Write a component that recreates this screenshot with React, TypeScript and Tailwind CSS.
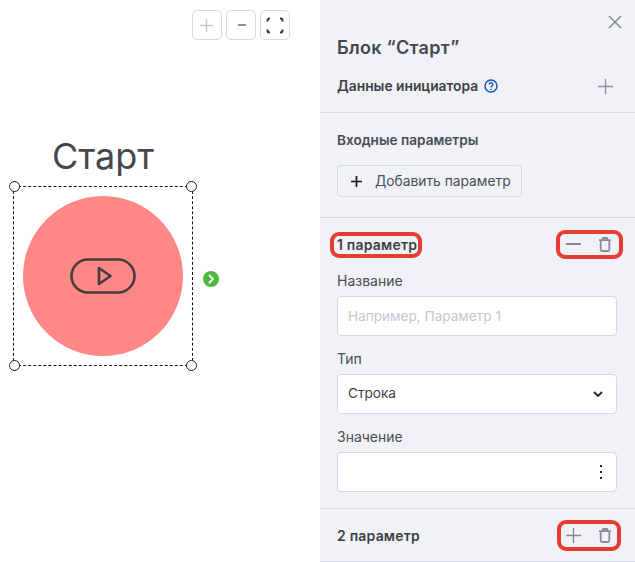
import React from 'react'

const font = "[font-family:Inter,'Noto_Sans',sans-serif]"

const PlusIcon = ({ size = 18, strokeWidth = 1.4, className = '' }: { size?: number; strokeWidth?: number; className?: string }) => (
  <svg width={size} height={size} viewBox="0 0 16 16" className={className} fill="none" stroke="currentColor" strokeWidth={strokeWidth}>
    <path d="M8 0v16M0 8h16" />
  </svg>
)

const TrashIcon = () => (
  <svg width="12" height="15" viewBox="0 0 12 15" fill="none" stroke="#858d9b" strokeWidth="1.8" strokeLinejoin="round">
    <path d="M0 3.2h12M3.8 3.2V1h4.4v2.2M1.7 3.2v9.4c0 .9.5 1.4 1.4 1.4h5.8c.9 0 1.4-.5 1.4-1.4V3.2" />
  </svg>
)

const Handle = ({ className }: { className: string }) => (
  <div className={`absolute w-[11px] h-[11px] rounded-full bg-white border border-[#222] ${className}`} />
)

const ZoomButton = ({ children }: { children: React.ReactNode }) => (
  <div className="w-[30px] h-[30px] flex items-center justify-center bg-white border border-[#d5dae6] rounded-[5px]">
    {children}
  </div>
)

const RedBox = ({ className }: { className: string }) => (
  <span className={`absolute border-[4px] border-[#e83c33] rounded-[9px] ${className}`} />
)

const Field = ({ label, children }: { label: string; children: React.ReactNode }) => (
  <div className="mb-[15px]">
    <div className="text-[14px] leading-[15px] text-[#4a4d55] mb-[8px]">{label}</div>
    <div className="h-[40px] bg-white border border-[#d3d9e6] rounded-[4px] flex items-center px-[10px] text-[13.6px]">
      {children}
    </div>
  </div>
)

export default function App() {
  return (
    <div className={`w-[635px] h-[562px] flex overflow-hidden bg-white ${font}`}>
      <div className="relative w-[320px] h-full bg-white">
        <div className="absolute left-[192px] top-[10px] flex gap-[4px]">
          <ZoomButton><PlusIcon size={13} strokeWidth={1.8} className="text-[#c3c8d4] -ml-[1px]" /></ZoomButton>
          <ZoomButton><span className="w-[8px] h-[2px] bg-[#8a8f99] ml-[1px]" /></ZoomButton>
          <ZoomButton>
            <svg width="18" height="17" viewBox="0 0 18 17" fill="none" stroke="#333" strokeWidth="2">
              <path d="M1.5 4.500V3.500a2 2 0 0 1 2-2h.5M14 1.500h.5a2 2 0 0 1 2 2v1M16.500 12.500v1a2 2 0 0 1-2 2H14M4 15.500h-.5a2 2 0 0 1-2-2v-1" />
            </svg>
          </ZoomButton>
        </div>
        <div className="absolute left-[52px] top-[134px] text-[36px] leading-[44px] text-[#45474d]">Старт</div>
        <div className="absolute left-[13px] top-[186px] w-[180px] h-[180px] border border-dashed border-[#111]">
          <div className="absolute left-[9px] top-[9px] w-[160px] h-[160px] rounded-full bg-[#ff8886] flex items-center justify-center">
            <svg width="66" height="36" viewBox="0 0 66 36" fill="none" stroke="#443c3e" strokeWidth="2.6" strokeLinejoin="round">
              <rect x="1.500" y="1.500" width="63" height="33" rx="16.500" />
              <path d="M29 10v16l11.500-8z" />
            </svg>
          </div>
          <Handle className="-left-[5px] -top-[6px]" />
          <Handle className="-right-[5px] -top-[6px]" />
          <Handle className="-left-[5px] -bottom-[6px]" />
          <Handle className="-right-[5px] -bottom-[6px]" />
        </div>
        <div className="absolute left-[203px] top-[271px] w-[16px] h-[16px] rounded-full bg-[#4cbb3c] flex items-center justify-center">
          <svg width="8" height="10" viewBox="0 0 8 10" fill="none" stroke="#fff" strokeWidth="1.8">
            <path d="M2 1l4 4-4 4" />
          </svg>
        </div>
      </div>

      <div className="relative w-[315px] h-full bg-[#f0f2f7]">
        <svg width="14" height="14" viewBox="0 0 14 14" className="absolute right-[13px] top-[15px]" fill="none" stroke="#7b8088" strokeWidth="1.3">
          <path d="M1 1l12 12M13 1L1 13" />
        </svg>
        <div className="h-[113px] px-[17px] pt-[37px] border-b border-[#d3d9e6]">
          <div className="text-[18px] leading-[22px] font-semibold tracking-[0.3px] text-[#45474d]">Блок “Старт”</div>
          <div className="mt-[17px] flex items-center justify-between pr-[5px]">
            <div className="flex items-center gap-[6px]">
              <span className="text-[13.8px] leading-[20px] font-semibold text-[#3d3f45]">Данные инициатора</span>
              <svg width="14" height="14" viewBox="0 0 14 14" fill="none" stroke="#0d4fb3" strokeWidth="1.4">
                <circle cx="7" cy="7" r="6" />
                <path d="M5.2 5.500a1.800 1.800 0 1 1 2.700 1.600c-.6.300-.9.600-.9 1.300" />
                <path d="M7 9.800v1.200" />
              </svg>
            </div>
            <PlusIcon size={15} className="text-[#8b929c]" />
          </div>
        </div>

        <div className="h-[105px] px-[17px] pt-[19px] border-b border-[#d3d9e6]">
          <div className="text-[13.6px] leading-[17px] font-semibold text-[#4a4d55]">Входные параметры</div>
          <div className="mt-[16px] w-[185px] h-[32px] flex items-center gap-[13px] pl-[13px] border border-[#d3d9e6] rounded-[4px] text-[13.8px] text-[#4a4d55]">
            <PlusIcon size={11} strokeWidth={2.400} className="text-[#111]" />
            <span>Добавить параметр</span>
          </div>
        </div>

        <div className="h-[291px] pl-[17px] pr-[18px] pt-[17px] border-b border-[#d3d9e6]">
          <div className="flex items-center justify-between h-[18px] mb-[20px]">
            <span className="relative text-[14px] font-semibold tracking-[0.2px] text-[#3d3f45]">
              1 параметр
              <RedBox className="-left-[7px] -right-[5px] -top-[2px] -bottom-[3px]" />
            </span>
            <div className="relative flex items-center gap-[18px] pr-[6px]">
              <span className="w-[15px] h-[1.5px] bg-[#7d8794]" />
              <TrashIcon />
              <RedBox className="-left-[10px] -right-[6px] -top-[7px] -bottom-[7px]" />
            </div>
          </div>
          <Field label="Название">
            <span className="text-[#c4c6cb]">Например, Параметр 1</span>
          </Field>
          <Field label="Тип">
            <span className="flex-1 text-[#3d3f45] -mt-[1px]">Строка</span>
            <svg width="10" height="7" viewBox="0 0 10 7" fill="none" stroke="#222" strokeWidth="1.8" className="mr-[3px]">
              <path d="M1 1l4 4 4-4" />
            </svg>
          </Field>
          <Field label="Значение">
            <span className="flex-1" />
            <span className="flex flex-col gap-[4px] pr-[4px]">
              <span className="w-[2px] h-[2px] bg-[#222]" />
              <span className="w-[2px] h-[2px] bg-[#222]" />
              <span className="w-[2px] h-[2px] bg-[#222]" />
            </span>
          </Field>
        </div>

        <div className="h-[53px] pl-[17px] pr-[18px] flex items-center justify-between border-b border-[#d3d9e6]">
          <span className="text-[14px] font-semibold tracking-[0.2px] text-[#3d3f45]">2 параметр</span>
          <div className="relative flex items-center gap-[18px] pr-[6px]">
            <PlusIcon size={15} className="text-[#7d8794]" />
            <TrashIcon />
            <RedBox className="-left-[9px] -right-[4px] -top-[8px] -bottom-[8px]" />
          </div>
        </div>
      </div>
    </div>
  )
}
